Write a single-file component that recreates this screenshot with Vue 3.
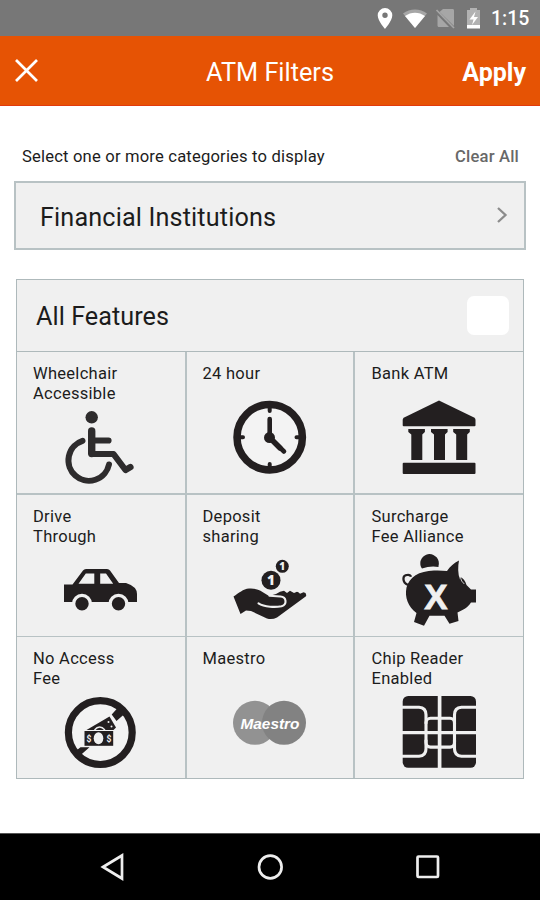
<script setup>
const features = [
  { id: 'wheelchair', lines: ['Wheelchair', 'Accessible'] },
  { id: 'clock', lines: ['24 hour'] },
  { id: 'bank', lines: ['Bank ATM'] },
  { id: 'car', lines: ['Drive', 'Through'] },
  { id: 'deposit', lines: ['Deposit', 'sharing'] },
  { id: 'pig', lines: ['Surcharge', 'Fee Alliance'] },
  { id: 'nofee', lines: ['No Access', 'Fee'] },
  { id: 'maestro', lines: ['Maestro'] },
  { id: 'chip', lines: ['Chip Reader', 'Enabled'] },
]
</script>

<template>
  <div class="screen">
    <div class="status">
      <svg class="status-icons" width="106" height="24" viewBox="0 0 106 24">
        <path fill="#fff" fill-rule="evenodd" d="M8 2a7.3 7.3 0 0 0-7.3 7.3C.7 15 8 23 8 23s7.300-8 7.300-13.700A7.300 7.300 0 0 0 8 2zm0 4.600a2.700 2.700 0 1 1 0 5.400 2.700 2.700 0 0 1 0-5.400z" />
        <path fill="#a6a6a6" d="M26 7.500C33 2 43 2 50 7.500L38 22z" />
        <path fill="#fff" d="M28 10c6-4.500 14-4.500 20 0L38 22z" />
        <path fill="#a6a6a6" d="M66 3h9.500c1 0 1.500.6 1.500 1.500V20L62.500 6zM60.500 9 72 21H62c-1 0-1.500-.6-1.500-1.500z" />
        <path stroke="#a6a6a6" stroke-width="1.700" d="m59.500 4 17.500 18" />
        <path fill="#b2b2b2" d="M90 4h3V2h7v2h3v18H90z" />
        <path fill="#fff" d="M90 19h13v3.500H90zM98.500 5.500l-6 8h4l-1.500 5.500 6-8h-4z" />
      </svg>
      <span class="time">1:15</span>
    </div>

    <header class="bar">
      <svg class="close" width="24" height="24" viewBox="0 0 24 24">
        <path d="M2 1l21 21M23 1l-21 21" stroke="#fff" stroke-width="2.700" />
      </svg>
      <h1 class="title">ATM Filters</h1>
      <span class="apply">Apply</span>
    </header>

    <main class="content">
      <div class="hint">
        <span class="hint-text">Select one or more categories to display</span>
        <span class="clear">Clear All</span>
      </div>

      <div class="institutions">
        <span class="inst-text">Financial Institutions</span>
        <svg class="chevron" width="12" height="18" viewBox="0 0 12 18">
          <path d="M2 2l7.500 7L2 16" fill="none" stroke="#8c8c8c" stroke-width="2.300" />
        </svg>
      </div>

      <section class="panel">
        <div class="all">
          <span class="all-text">All Features</span>
          <span class="check"></span>
        </div>
        <div class="grid">
          <div v-for="f in features" :key="f.id" class="cell">
            <div class="label"><div v-for="l in f.lines" :key="l">{{ l }}</div></div>
            <div class="art">
              <svg width="74" height="74" viewBox="0 0 74 74">
                <g v-if="f.id === 'wheelchair'" fill="none" stroke="#2e2c2d" stroke-width="6.200" stroke-linecap="round" stroke-linejoin="round">
                  <circle cx="27.700" cy="6.300" r="6.200" fill="#2e2c2d" stroke="none" />
                  <path stroke-width="7.400" d="M27.700 20v22.500" />
                  <path d="M28 29.500h16.500M28 43h21.500l12 16 5-3" />
                  <path stroke-width="6" d="M18.500 29.800A20.500 20.500 0 1 0 45 53.500" />
                </g>
                <g v-else-if="f.id === 'clock'" stroke="#231f20" fill="none" stroke-linecap="round">
                  <circle cx="36.700" cy="36.200" r="32.700" fill="#f3f3f3" stroke-width="7.500" />
                  <path stroke-width="4" d="M36.700 7v3M36.700 63v3M7 36.200h3M63.500 36.200h3" />
                  <path stroke-width="4.600" d="M36.700 18v18.500L51 50.500" />
                  <circle cx="36.500" cy="36.600" r="5.500" fill="#231f20" stroke="none" />
                  <path stroke-width="5.400" d="M38 38l9 9" />
                </g>
                <g v-else-if="f.id === 'bank'" fill="#231f20">
                  <path d="M36-.5 71 16.500q1.500.8 1.500 2.200v5.500q0 1-1 1H.7q-1 0-1-1v-5.500q0-1.400 1.500-2.200z" />
                  <path v-for="x in [5.3, 28, 50.2]" :key="x" :transform="`translate(${x} 0)`" d="M0 28h16.600v3l-2.600 2.500V59H3V33.500L0 31z" />
                  <rect x="-.3" y="61.700" width="72.800" height="11.200" rx="1" />
                </g>
                <g v-else-if="f.id === 'car'">
                  <path fill="#231f20" fill-rule="evenodd" d="M0 31.500h8.500L19 17.500Q20 16 22 16h21q2 0 3 1.500l9 12.500h7q11 3.500 11 11v8H0zM14.500 30.800h15.800V20.500h-8.500zM36.200 20.500v10.300h13L42 20.500z" />
                  <g fill="#231f20" stroke="#f0f0f0" stroke-width="3.400">
                    <circle cx="18" cy="50.800" r="8.400" />
                    <circle cx="54.500" cy="50.800" r="8.400" />
                  </g>
                </g>
                <g v-else-if="f.id === 'deposit'">
                  <circle cx="49.300" cy="13.300" r="6.500" fill="#231f20" />
                  <circle cx="38" cy="27.300" r="9.500" fill="#231f20" />
                  <text class="coin" x="49.300" y="16.800" font-size="10">1</text>
                  <text class="coin" x="38" y="32" font-size="13.500">1</text>
                  <path fill="#231f20" d="M.5 43.500C6 40 10 36 16 35.500q6-.5 11 2l9 5.500 7-2q4-3 8-3.200l3 2.200 3-2.200 4 2.200 3-1.200q2 .5 3 2l3.500-1.500q3.500.5 2.500 4L44 64.500q-5 2.500-10 1L18 58l-5-.5-5.500 3.500z" />
                  <path fill="none" stroke="#f0f0f0" stroke-width="2.100" stroke-linecap="round" d="M25.500 50.300c6 4 17 4 23 3 6-2 5-9.500-1-9.800l-11-.7" />
                </g>
                <g v-else-if="f.id === 'pig'" fill="#231f20" transform="translate(0 -.5)">
                  <path d="M18 14.500a9.300 9.300 0 1 1 17.500-1v1q-8-1.500-16.500 1.500z" />
                  <path d="M3.500 35C6 25 16 18.300 31 18c5-.2 9 0 13 .6 3-4.600 7-8 12-10.600q-2 10 .8 19v-2.700q5 2 6.700 8.200l4.500 4.500h5v13h-5c-3 5-8 7.500-13.500 10l1 8.500-9 2.700-5-8H26.500L21 73.300l-10-3.800 2.500-9C5 54 1.500 45 3.500 35z" />
                  <path d="M57.300 24.500q.7 4.500 4 7" fill="none" stroke="#f0f0f0" stroke-width=".8" />
                  <path d="M5 32.500C-1 30-1 22.500 4.500 22.300q3-.2 3.500 2" fill="none" stroke="#231f20" stroke-width="2.300" />
                  <text class="cross" x="33" y="56">X</text>
                </g>
                <g v-else-if="f.id === 'nofee'">
                  <circle cx="36.300" cy="36.600" r="31.900" fill="#f3f3f3" stroke="#231f20" stroke-width="7.200" />
                  <path fill="#231f20" d="M54.500 11l6.500 6.500-8.500 7.500-4.800-6.500zM10.500 56l6-4.800h9L15 60.500z" />
                  <path fill="#231f20" d="M22.500 34 45.500 20.500l6.500 11-2.500 2.500z" />
                  <path d="M30.500 34q5-6 10.500 0" fill="none" stroke="#f0f0f0" stroke-width="1.300" />
                  <circle cx="44.500" cy="26" r="1" fill="#f0f0f0" />
                  <circle cx="47.500" cy="30.500" r="1" fill="#f0f0f0" />
                  <rect x="20.500" y="35" width="28.700" height="14.800" fill="#231f20" />
                  <ellipse cx="34.500" cy="42.200" rx="4.800" ry="6" fill="#f0f0f0" />
                  <text class="bill" x="25" y="45.500">$</text>
                  <text class="bill" x="45" y="45.500">$</text>
                </g>
                <g v-else-if="f.id === 'maestro'">
                  <circle cx="22" cy="36.800" r="22" fill="#929292" />
                  <circle cx="51" cy="36.800" r="22" fill="#828282" />
                  <text class="maestro" x="7.500" y="42.500" textLength="59" lengthAdjust="spacingAndGlyphs">Maestro</text>
                </g>
                <g v-else>
                  <rect x="-.3" y="0" width="73.300" height="71.800" rx="5.500" fill="#231f20" />
                  <g fill="none" stroke="#f0f0f0" stroke-width="3.100">
                    <path stroke-width="3.700" d="M36.600-1v74" />
                    <path d="M-1 36.600h75M-1 11.200h17q7 .5 7 7.500v9M74 11.200H58.500q-7 .5-7 7.500v9M-1 60.300h17q7-.5 7-7.500v-9M74 60.300H58.500q-7-.5-7-7.500v-9" />
                    <rect x="23" y="22.300" width="28.500" height="28.800" rx="4.500" />
                  </g>
                </g>
              </svg>
            </div>
          </div>
        </div>
      </section>
    </main>

    <nav class="nav">
      <svg width="28" height="30" viewBox="0 0 28 30"><path d="M4 15 23 3.500v23z" /></svg>
      <svg width="28" height="30" viewBox="0 0 28 30"><circle cx="14.300" cy="15" r="11.300" /></svg>
      <svg width="28" height="30" viewBox="0 0 28 30"><rect x="4.500" y="4.500" width="20.500" height="20.500" rx="1" /></svg>
    </nav>
  </div>
</template>

<style>
body { background: #fff; }
</style>

<style scoped>
.screen {
  width: 540px;
  height: 900px;
  display: flex;
  flex-direction: column;
  font-family: Roboto, "Liberation Sans", sans-serif;
  color: #1c1c1c;
  background: #fff;
  overflow: hidden;
}
.status {
  height: 36px;
  box-sizing: border-box;
  background: #777;
  display: flex;
  justify-content: flex-end;
  align-items: center;
  gap: 8px;
  padding: 1px 12px 0 0;
}
.status-icons { margin-top: -1px; }
.time { width: 37px; font-size: 19.500px; font-weight: 500; color: #fff; line-height: 24px; white-space: nowrap; }
.bar {
  height: 70px;
  box-sizing: border-box;
  background: #e65304;
  border-bottom: 1px solid #e23a0c;
  color: #fff;
  display: grid;
  grid-template-columns: 1fr auto 1fr;
  align-items: center;
  padding: 5px 14px 0 14px;
}
.close { margin-top: -4px; }
.title { margin: 0; font-size: 25.300px; font-weight: 400; line-height: 30px; }
.apply { justify-self: end; font-size: 25px; font-weight: 700; line-height: 30px; }
.content { flex: 1; }
.hint {
  height: 75px;
  box-sizing: border-box;
  display: flex;
  justify-content: space-between;
  align-items: flex-start;
  padding: 41px 21px 0 22px;
  font-size: 16.600px;
  line-height: 20px;
  letter-spacing: .18px;
}
.clear { color: #686868; font-weight: 500; }
.institutions {
  margin: 0 14px;
  height: 69px;
  box-sizing: border-box;
  border: 2px solid #b8c2c4;
  background: #f0f0f0;
  display: flex;
  justify-content: space-between;
  align-items: center;
  padding: 3px 16px 0 24px;
  font-size: 25.200px;
  letter-spacing: .15px;
}
.chevron { margin-top: -4px; }
.panel {
  margin: 29px 16px 0;
  width: 508px;
  height: 500px;
  box-sizing: border-box;
  border: 1px solid #aeb9bb;
  background: #f0f0f0;
}
.all {
  height: 71px;
  display: flex;
  justify-content: space-between;
  align-items: center;
  padding: 0 14px 0 19px;
  font-size: 25.200px;
  letter-spacing: .05px;
}
.all-text { padding-top: 2px; }
.check { width: 42px; height: 39px; border-radius: 7px; background: #fff; }
.grid {
  display: grid;
  grid-template-columns: 168px 166.500px 1fr;
  grid-template-rows: 141px 141px 141px;
  gap: 1.500px;
  border-top: 1px solid #aeb9bb;
  background: #b8c2c4;
}
.cell { background: #f0f0f0; display: flex; flex-direction: column; }
.label { padding: 12px 0 0 16px; font-size: 16.500px; line-height: 20px; letter-spacing: .28px; }
.cell:nth-child(3n) .label { padding-left: 17px; }
.art { flex: 1; min-height: 0; display: flex; align-items: center; justify-content: center; padding-bottom: 2px; }
.cell:nth-child(3n) .art { padding-left: 2px; }
.art svg { overflow: visible; flex: none; }
.coin { fill: #f0f0f0; font-family: "Open Sans", sans-serif; font-weight: 800; text-anchor: middle; }
.cross { fill: #f0f0f0; font-family: "Liberation Sans", sans-serif; font-weight: 700; font-size: 35px; text-anchor: middle; stroke: #f0f0f0; stroke-width: .8px; }
.bill { fill: #f0f0f0; font-weight: 700; font-size: 8.500px; text-anchor: middle; }
.maestro { fill: #fff; font-family: "Liberation Sans", sans-serif; font-style: italic; font-weight: 700; font-size: 15.500px; }
.nav {
  height: 67px;
  box-sizing: border-box;
  background: #000;
  border-top: 1px solid #555;
  display: flex;
  justify-content: center;
  align-items: center;
  gap: 129px;
}
.nav svg { fill: none; stroke: #eee; stroke-width: 2.700px; }
</style>
